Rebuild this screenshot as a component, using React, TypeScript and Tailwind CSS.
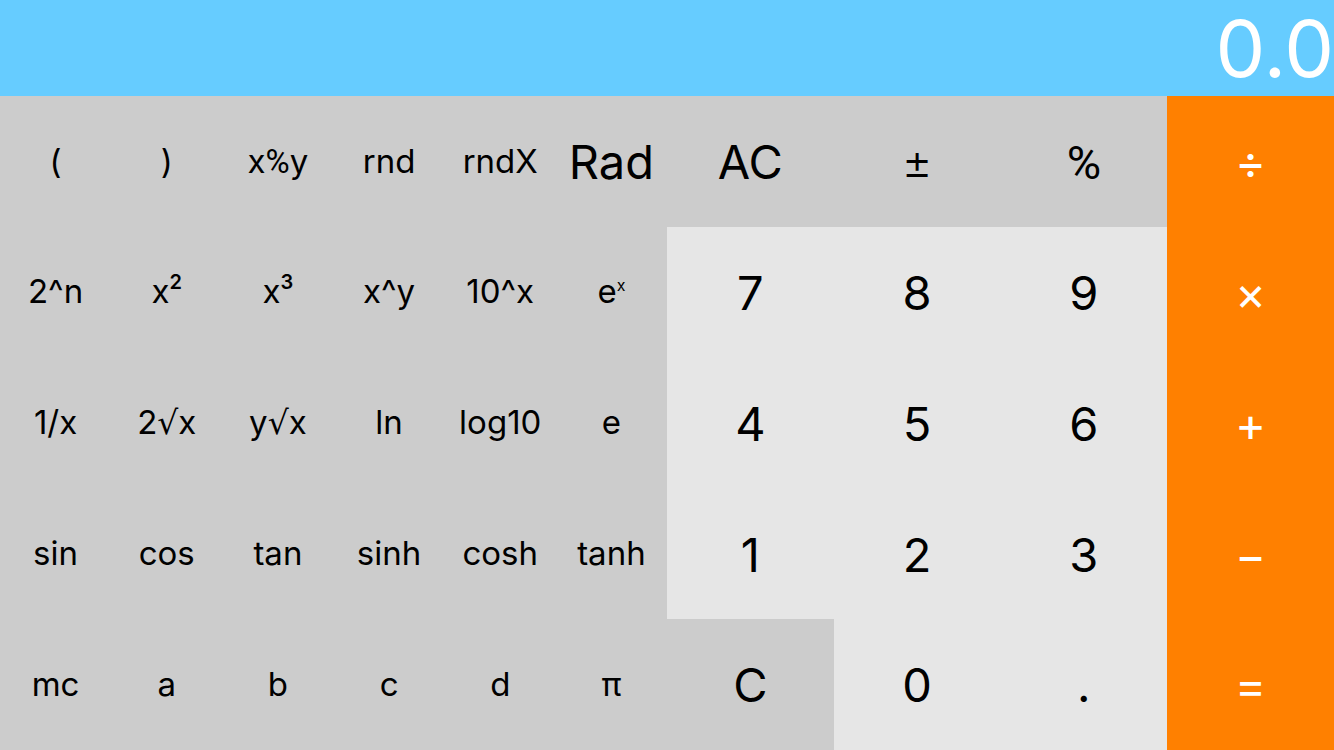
import React from "react";

type Key = { label: React.ReactNode; large?: boolean };

function Percent() {
  return <span className="font-['Roboto',sans-serif]">%</span>;
}

function Root() {
  return <span className="font-['DejaVu_Sans',sans-serif] leading-none">√</span>;
}

function Power({ children }: { children: React.ReactNode }) {
  return <sup className="-top-3.5 text-xl leading-none font-semibold">{children}</sup>;
}

const scientific: Key[] = [
  { label: "(" },
  { label: ")" },
  { label: <>x<Percent />y</> },
  { label: "rnd" },
  { label: "rndX" },
  { label: "Rad", large: true },
  { label: "2^n" },
  { label: <>x<Power>2</Power></> },
  { label: <>x<Power>3</Power></> },
  { label: "x^y" },
  { label: "10^x" },
  { label: <>e<sup className="-top-3 text-base leading-none">x</sup></> },
  { label: "1/x" },
  { label: <>2<Root />x</> },
  { label: <>y<Root />x</> },
  { label: "ln" },
  { label: "log10" },
  { label: "e" },
  { label: "sin" },
  { label: "cos" },
  { label: "tan" },
  { label: "sinh" },
  { label: "cosh" },
  { label: "tanh" },
  { label: "mc" },
  { label: "a" },
  { label: "b" },
  { label: "c" },
  { label: "d" },
  { label: "π" },
];

const standard = [
  "AC", "±", "%", "÷",
  "7", "8", "9", "×",
  "4", "5", "6", "+",
  "1", "2", "3", "−",
  "C", "0", ".", "=",
];

function tone(label: string) {
  if ("÷×+−=".includes(label)) return "bg-[#ff8000] text-white";
  if (label === "±") return "bg-[#cccccc] font-[350] text-black";
  if (["AC", "%", "C"].includes(label)) return "bg-[#cccccc] text-black";
  return "bg-[#e6e6e6] text-black";
}

export default function App() {
  return (
    <main className="flex h-screen flex-col bg-[#cccccc] font-['Inter',sans-serif] text-black">
      <output className="flex h-24 shrink-0 items-center justify-end bg-[#66ccff] text-[79px] leading-none text-white">
        0.0
      </output>
      <div className="grid min-h-0 flex-1 grid-cols-2">
        <div className="grid grid-cols-6 grid-rows-5">
          {scientific.map((key, i) => (
            <button key={i} type="button" className={key.large ? "pt-0.5 text-[47px]" : "text-[33px]"}>
              {key.label}
            </button>
          ))}
        </div>
        <div className="grid grid-cols-4 grid-rows-5">
          {standard.map((label) => (
            <button key={label} type="button" className={`pt-0.5 text-[47px] ${tone(label)}`}>
              {label === "%" ? <Percent /> : label}
            </button>
          ))}
        </div>
      </div>
    </main>
  );
}
